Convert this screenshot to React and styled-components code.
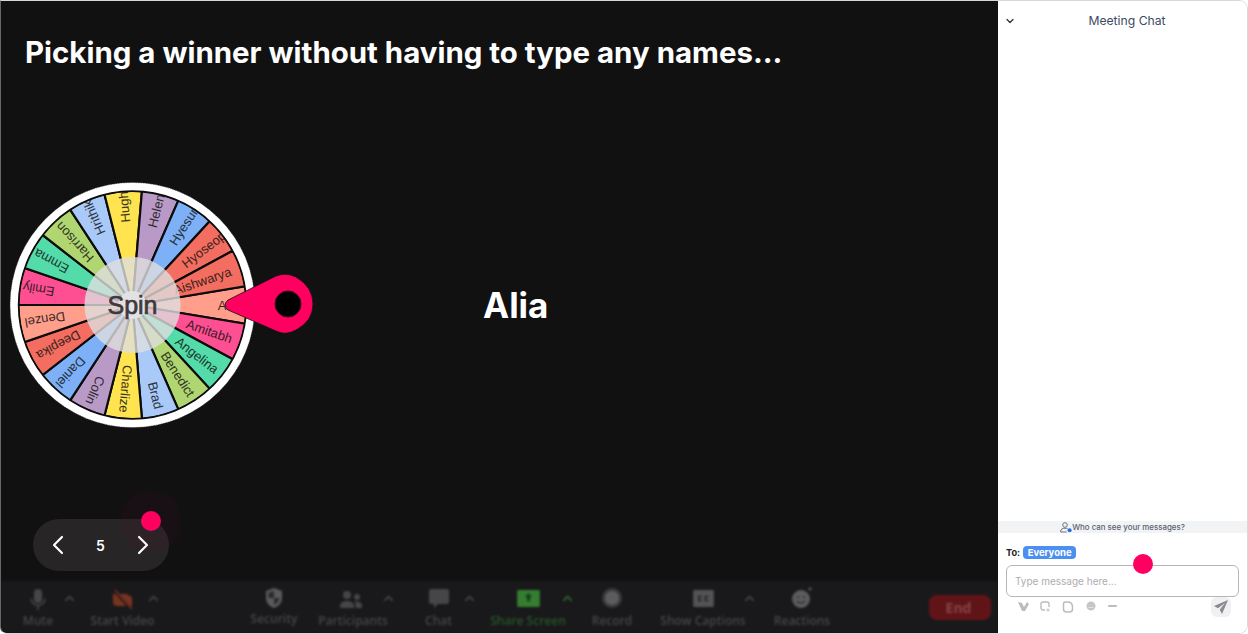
import React from 'react';
import styled, { createGlobalStyle } from 'styled-components';
import { ChevronDown, ChevronLeft, ChevronRight, ChevronUp } from 'lucide-react';

const GlobalStyle = createGlobalStyle`
  html, body {
    margin: 0;
    padding: 0;
    background: #fff;
    font-family: Inter, "Liberation Sans", sans-serif;
  }
`;

const Frame = styled.div`
  box-sizing: border-box;
  width: 1248px;
  height: 634px;
  display: flex;
  overflow: hidden;
  border: 1px solid #d8d8d8;
  border-left-color: #666;
  border-radius: 0 9px 9px 7px;
  background: #fff;
`;

const Stage = styled.main`
  position: relative;
  width: 997px;
  flex: none;
  display: flex;
  flex-direction: column;
  background: #111112;
`;

const Title = styled.h1`
  margin: 0;
  padding: 33px 24px 0;
  color: #fff;
  font-size: 29.45px;
  line-height: 36px;
  font-weight: 700;
`;

const WheelRow = styled.div`
  margin-top: 110px;
  height: 250px;
  display: flex;
  align-items: center;
`;

const WinnerName = styled.div`
  margin-left: 152px;
  color: #fff;
  font-size: 35px;
  font-weight: 700;
  line-height: 44px;
`;

const Pager = styled.div`
  position: relative;
  margin: 89px 0 0 32px;
  width: 136px;
  height: 52px;
  border-radius: 26px;
  background: #272526;
  color: #fff;
  font-size: 14px;
  font-weight: 600;
  display: flex;
  align-items: center;
  justify-content: space-between;
  padding: 0 10px 0 9px;
  box-sizing: border-box;
`;

const CursorDot = styled.span`
  position: absolute;
  left: ${p => p.$x}px;
  top: ${p => p.$y}px;
  width: 20px;
  height: 20px;
  border-radius: 50%;
  background: #ff0061;
  box-shadow: ${p => (p.$halo ? '0 0 0 20px rgba(255, 0, 97, 0.03)' : 'none')};
`;

const Toolbar = styled.footer`
  margin-top: auto;
  height: 52px;
  display: flex;
  background: #19191b;
  padding-left: 23px;
  filter: blur(1.2px);
`;

const Tool = styled.div`
  position: relative;
  width: ${p => p.$w}px;
  margin-left: ${p => p.$gap || 0}px;
  display: flex;
  flex-direction: column;
  align-items: center;
  padding-top: ${p => p.$top || 7}px;
  color: ${p => p.$color || '#464648'};
`;

const ToolIcon = styled.div`
  height: 24px;
  display: flex;
  align-items: center;
  margin-left: ${p => p.$shift || 0}px;
  margin-top: ${p => -(p.$lift || 0)}px;
  margin-bottom: ${p => p.$lift || 0}px;
`;

const ToolLabel = styled.span`
  margin-top: 1px;
  font-family: "Open Sans", sans-serif;
  font-size: 12px;
  line-height: 16px;
  font-weight: 600;
  white-space: nowrap;
`;

const Caret = styled.span`
  position: absolute;
  left: ${p => p.$x}px;
  top: 10px;
  display: flex;
  color: ${p => p.$color || '#464648'};
`;

const EndButton = styled.button`
  margin: 14px 7px 0 auto;
  padding: 0 3px 0 0;
  width: 62px;
  height: 25px;
  border: 0;
  border-radius: 8px;
  background: #611417;
  color: #834649;
  font-family: "Open Sans", sans-serif;
  font-size: 14px;
  font-weight: 700;
`;

const ChatPanel = styled.aside`
  position: relative;
  flex: 1;
  display: flex;
  flex-direction: column;
  background: #fff;
  color: #3d4a63;
`;

const ChatHeader = styled.header`
  height: 39px;
  display: flex;
  align-items: center;
  justify-content: center;
  position: relative;
  font-size: 12.2px;
  line-height: 40px;
  padding-left: 9px;
`;

const CollapseIcon = styled.span`
  position: absolute;
  left: 6px;
  top: 14px;
  display: flex;
  color: #333;
`;

const ChatBody = styled.div`
  flex: 1;
`;

const NoticeBar = styled.div`
  height: 12px;
  display: flex;
  align-items: center;
  justify-content: center;
  background: #f2f3f5;
  color: #5a6170;
  font-size: 7.9px;
  font-weight: 500;
`;

const Composer = styled.div`
  height: 100px;
  padding: 13px 8px 0 8px;
  box-sizing: border-box;
`;

const ToRow = styled.div`
  display: flex;
  align-items: center;
  gap: 3px;
  height: 13px;
  color: #222;
  font-size: 9.2px;
  font-weight: 700;
`;

const Recipient = styled.span`
  background: #4d8ff0;
  color: #fff;
  font-size: 9.5px;
  font-weight: 700;
  line-height: 13px;
  padding: 0 4.5px;
  border-radius: 4px;
`;

const InputBox = styled.div`
  box-sizing: border-box;
  margin-top: 6px;
  width: 233px;
  height: 32px;
  border: 1px solid #b6b6b8;
  border-radius: 6px;
  padding: 0 8px;
  display: flex;
  align-items: center;
  color: #adadb0;
  font-size: 10px;
`;

const ActionRow = styled.div`
  display: flex;
  align-items: flex-start;
  padding-left: 12px;
  gap: 11px;
  height: 20px;
  color: #bcbcbf;
`;

const ActionIcon = styled.span`
  display: flex;
  margin-top: 4px;
`;

const SendButton = styled.span`
  margin: 0 8px 0 auto;
  width: 20px;
  height: 20px;
  border-radius: 6px;
  background: #f0f0f3;
  display: flex;
  align-items: center;
  justify-content: center;
  color: #8b8b8f;
`;

const COLORS = ['#ff9e8a', '#ff4f93', '#54dbaa', '#b0d672', '#a9caf9', '#ffe44f', '#b99ac6', '#7db0f7', '#f36d60'];

// end = radius where the name stops, the top ones run into the rim
const NAMES = [
  ['Alia', 0, 107], ['Amitabh', 1, 105], ['Angelina', 2, 107], ['Benedict', 3, 108], ['Brad', 4, 107],
  ['Charlize', 5, 108], ['Colin', 6, 108], ['Daniel', 7, 110], ['Deepika', 8, 108], ['Denzel', 0, 109],
  ['Emily', 1, 111], ['Emma', 2, 111], ['Harrison', 3, 110], ['Hrithik', 4, 114], ['Hugh', 5, 114],
  ['Helen', 6, 114], ['Hyesun', 7, 117], ['Hyoseop', 8, 116], ['Aishwarya', 8, 104],
];

const CX = 131.5;
const CY = 125;
const RIM = 114;

function point(r, deg) {
  const a = (deg * Math.PI) / 180;
  return `${(CX + r * Math.cos(a)).toFixed(2)} ${(CY + r * Math.sin(a)).toFixed(2)}`;
}

function Wheel() {
  const step = 360 / NAMES.length;
  return (
    <svg width="330" height="250" viewBox="0 0 330 250" fontFamily="Liberation Sans, Arial, sans-serif">
      <defs>
        <clipPath id="rim">
          <circle cx={CX} cy={CY} r={RIM} />
        </clipPath>
      </defs>
      <circle cx={CX} cy={CY} r={122.5} fill="#fff" stroke="#333" strokeWidth="0.6" strokeDasharray="1.5 1" />
      <g clipPath="url(#rim)">
        {NAMES.map(([name, color], i) => {
          const from = i * step - step / 2;
          const to = from + step;
          return (
            <path
              key={name}
              d={`M${CX} ${CY} L${point(RIM, from)} A${RIM} ${RIM} 0 0 1 ${point(RIM, to)} Z`}
              fill={COLORS[color]}
              stroke="#0c0c0c"
              strokeWidth="2.2"
            />
          );
        })}
        {NAMES.map(([name, , end], i) => (
          <text
            key={name}
            x={CX + end}
            y={CY + 4.5}
            fontSize="13"
            textAnchor="end"
            fill="#111"
            fillOpacity="0.82"
            stroke="#111"
            strokeOpacity="0.3"
            strokeWidth="0.25"
            transform={`rotate(${i * step} ${CX} ${CY})`}
          >
            {name}
          </text>
        ))}
      </g>
      <circle cx={CX} cy={CY} r={RIM} fill="none" stroke="#0c0c0c" strokeWidth="1.4" />
      <circle cx={CX} cy={CY} r={48} fill="#dedede" fillOpacity="0.8" />
      <circle cx={CX} cy={CY} r={14} fill="#e2e2e2" />
      <text x={CX} y={CY + 9} fontSize="25" textAnchor="middle" fill="#3f393e" stroke="#3f393e" strokeWidth="0.7">Spin</text>
      <path
        d="M227 120 L275 96 Q285 92 295 97 Q312 107 312 124 Q312 141 295 150 Q285 156 275 151 L227 130 Q221 125 227 120 Z"
        fill="#ff0061"
        stroke="#111"
        strokeWidth="0.8"
      />
      <circle cx={287} cy={124} r={13} fill="#000" stroke="#3a0a1c" strokeWidth="1" />
    </svg>
  );
}

const MicIcon = () => (
  <svg width="22" height="24" viewBox="0 0 22 24" fill="currentColor">
    <rect x="7" y="1" width="8" height="14" rx="4" />
    <path d="M3.5 10.5h1.6c0 3.6 2.5 6 5.9 6s5.9-2.4 5.9-6h1.6c0 4.2-2.8 7.1-6.7 7.5V22h-1.6v-4c-3.9-.4-6.7-3.3-6.7-7.5z" />
  </svg>
);

const VideoOffIcon = () => (
  <svg width="22" height="22" viewBox="0 0 22 22" fill="currentColor">
    <path d="M1 5h13l6 3v9H5a4 4 0 0 1-4-4z" />
    <path d="M2 1l17 19" stroke="#19191b" strokeWidth="3" />
    <path d="M3 1l17 19" stroke="currentColor" strokeWidth="1.4" />
  </svg>
);

const ShieldIcon = () => (
  <svg width="20" height="22" viewBox="0 0 20 22">
    <path d="M10 1l8 3v7c0 5-3.5 8.500-8 10-4.500-1.500-8-5-8-10V4z" fill="#5a5a5c" />
    <path d="M10 4v7H4.500V5.800zM10 11h5.500c-.5 3.500-2.700 5.500-5.500 6.800z" fill="#2b2b2d" />
  </svg>
);

const UsersIcon = () => (
  <svg width="24" height="20" viewBox="0 0 24 20" fill="currentColor">
    <circle cx="8" cy="5" r="4" />
    <circle cx="18" cy="7" r="3" />
    <path d="M1 18v-2c0-3 3-5 7-5s7 2 7 5v2zM16.500 18v-3c0-1.500-.5-2.500-1.500-3.300 3.500-.8 8 .6 8 3.300v3z" />
  </svg>
);

const BubbleIcon = () => (
  <svg width="22" height="22" viewBox="0 0 22 22" fill="currentColor">
    <path d="M3 1h16a2 2 0 0 1 2 2v11a2 2 0 0 1-2 2H10l-4 4v-4H3a2 2 0 0 1-2-2V3a2 2 0 0 1 2-2z" />
  </svg>
);

const ShareIcon = () => (
  <svg width="23" height="17" viewBox="0 0 24 18">
    <rect width="24" height="18" rx="1.5" fill="#357d30" />
    <path d="M12 3.500l4 4h-2.500V12h-3V7.500H8z" fill="#133d14" />
  </svg>
);

const RecordIcon = () => (
  <svg width="22" height="22" viewBox="0 0 22 22">
    <circle cx="11" cy="11" r="10" fill="#39393b" />
    <circle cx="11" cy="11" r="7" fill="#5c5c5e" />
  </svg>
);

const CaptionsIcon = () => (
  <svg width="21" height="17" viewBox="0 0 22 18">
    <rect width="22" height="18" rx="1.5" fill="#535355" />
    <path d="M9 7H6v4h3M16 7h-3v4h3" fill="none" stroke="#232325" strokeWidth="1.6" />
  </svg>
);

const ReactionIcon = () => (
  <svg width="22" height="22" viewBox="0 0 22 22">
    <circle cx="10" cy="12" r="9" fill="#5c5c5e" />
    <circle cx="7" cy="10" r="1" fill="#2a2a2c" />
    <circle cx="13" cy="10" r="1" fill="#2a2a2c" />
    <path d="M6 14c1 2.500 7 2.500 8 0" fill="none" stroke="#2a2a2c" strokeWidth="1.2" />
    <path d="M19 0v4M17 2h4" stroke="#5c5c5e" strokeWidth="1" />
  </svg>
);

const PersonBadgeIcon = () => (
  <svg width="12" height="11" viewBox="0 0 12 11" fill="none">
    <circle cx="5" cy="3" r="2.300" stroke="#6c7280" />
    <path d="M.7 10V9c0-1.700 1.900-2.800 4.300-2.800 1 0 2 .2 2.700.6M.7 10h6" stroke="#6c7280" />
    <circle cx="9.600" cy="8.300" r="2" fill="#1f6fe0" />
  </svg>
);

const PenIcon = () => (
  <svg width="11" height="11" viewBox="0 0 11 11" fill="currentColor">
    <path d="M0 1l4 1 2 4 3-5 2 2-4 7H4z" />
  </svg>
);

const CropIcon = () => (
  <svg width="11" height="11" viewBox="0 0 11 11" fill="none" stroke="currentColor" strokeWidth="1.4">
    <path d="M5 9H3a2 2 0 0 1-2-2V3a2 2 0 0 1 2-2h4a2 2 0 0 1 2 2v3" />
    <path d="M8 7.500v3M6.500 9h3" strokeWidth="1" />
  </svg>
);

const FileIcon = () => (
  <svg width="12" height="12" viewBox="0 0 11 12" fill="none" stroke="currentColor" strokeWidth="1.5">
    <path d="M3 1h2c3 0 5 2 5 5v2a3 3 0 0 1-3 3H4a3 3 0 0 1-3-3V3a2 2 0 0 1 2-2z" />
  </svg>
);

const EmojiIcon = () => (
  <svg width="12" height="10" viewBox="0 0 12 10" fill="currentColor" fillOpacity="0.85">
    <path d="M6 .5a4.500 4.500 0 1 0 0 9 4.500 4.500 0 0 0 0-9zM3.500 6h5v.6h-5z" />
  </svg>
);

const MoreIcon = () => (
  <svg width="9" height="10" viewBox="0 0 9 10" fill="currentColor">
    <rect x="0" y="4" width="9" height="2" rx="1" />
  </svg>
);

const SendIcon = () => (
  <svg width="14" height="14" viewBox="0 0 14 14" fill="currentColor">
    <path d="M14 0L0 6l4 2.300L11 3 5.700 9.800 8 14z" />
  </svg>
);

const TOOLS = [
  { label: 'Mute', w: 28, gap: 0, icon: <MicIcon />, caret: 38 },
  { label: 'Start Video', w: 65, gap: 38, icon: <VideoOffIcon />, iconColor: '#7a3220', caret: 56 },
  { label: 'Security', w: 48, gap: 95, icon: <ShieldIcon />, top: 5 },
  { label: 'Participants', w: 70, gap: 20, icon: <UsersIcon />, shift: -5, caret: 63 },
  { label: 'Chat', w: 29, gap: 36, icon: <BubbleIcon />, lift: 1, caret: 38 },
  { label: 'Share Screen', w: 78, gap: 36, icon: <ShareIcon />, lift: 2, color: '#27552a', caret: 71, caretColor: '#2f6b29' },
  { label: 'Record', w: 42, gap: 24, icon: <RecordIcon />, lift: 2 },
  { label: 'Show Captions', w: 88, gap: 26, icon: <CaptionsIcon />, lift: 2, caret: 83 },
  { label: 'Reactions', w: 58, gap: 26, icon: <ReactionIcon />, lift: 2 },
];

function App() {
  return (
    <>
      <GlobalStyle />
      <Frame>
        <Stage>
          <Title>Picking a winner without having to type any names...</Title>
          <WheelRow>
            <Wheel />
            <WinnerName>Alia</WinnerName>
          </WheelRow>
          <Pager>
            <ChevronLeft size={32} strokeWidth={1.6} />
            <span>5</span>
            <ChevronRight size={32} strokeWidth={1.6} />
            <CursorDot $x={107.5} $y={-8} $halo />
          </Pager>
          <Toolbar>
            {TOOLS.map(t => (
              <Tool key={t.label} $w={t.w} $gap={t.gap} $color={t.color} $top={t.top}>
                <ToolIcon $shift={t.shift} $lift={t.lift} style={t.iconColor ? { color: t.iconColor } : undefined}>{t.icon}</ToolIcon>
                <ToolLabel>{t.label}</ToolLabel>
                {t.caret && (
                  <Caret $x={t.caret} $color={t.caretColor}>
                    <ChevronUp size={15} strokeWidth={2.5} />
                  </Caret>
                )}
              </Tool>
            ))}
            <EndButton>End</EndButton>
          </Toolbar>
        </Stage>
        <ChatPanel>
          <ChatHeader>
            <CollapseIcon><ChevronDown size={12} strokeWidth={2.5} /></CollapseIcon>
            Meeting Chat
          </ChatHeader>
          <ChatBody />
          <NoticeBar><PersonBadgeIcon />Who can see your messages?</NoticeBar>
          <Composer>
            <ToRow>To: <Recipient>Everyone</Recipient></ToRow>
            <InputBox>Type message here...</InputBox>
            <ActionRow>
              <ActionIcon><PenIcon /></ActionIcon>
              <ActionIcon><CropIcon /></ActionIcon>
              <ActionIcon><FileIcon /></ActionIcon>
              <ActionIcon><EmojiIcon /></ActionIcon>
              <ActionIcon><MoreIcon /></ActionIcon>
              <SendButton><SendIcon /></SendButton>
            </ActionRow>
          </Composer>
          <CursorDot $x={135} $y={553} />
        </ChatPanel>
      </Frame>
    </>
  );
}

export default App;
